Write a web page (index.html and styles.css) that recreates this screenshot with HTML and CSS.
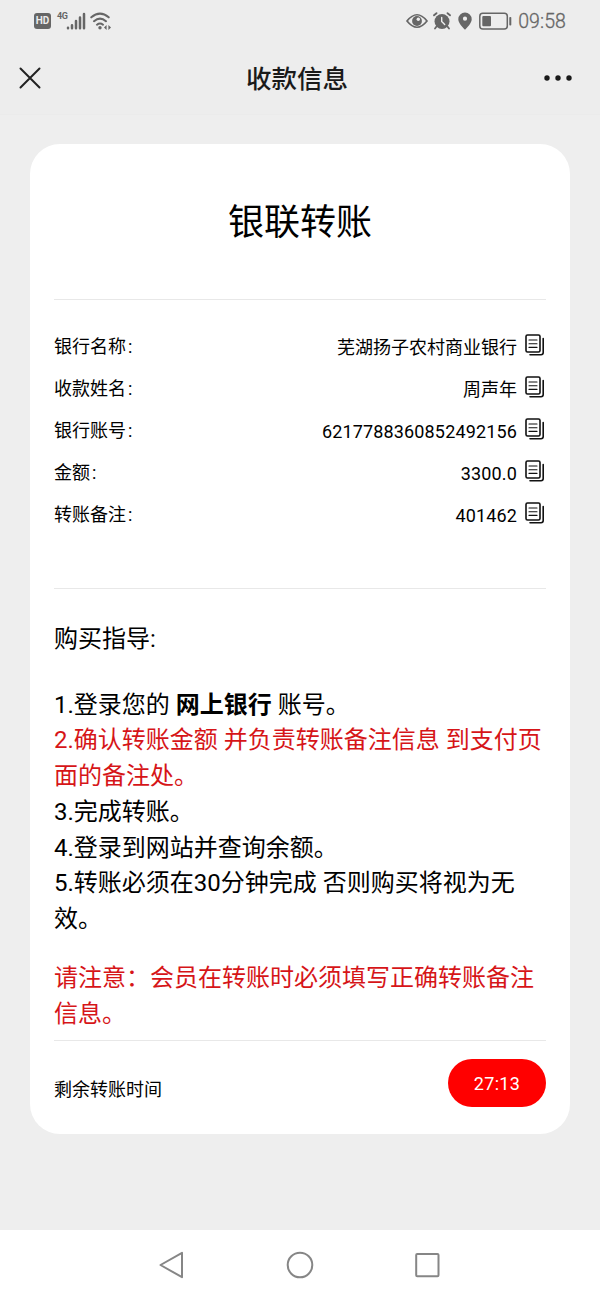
FILE: index.html
```
<!DOCTYPE html>
<html lang="zh-CN">
<head>
  <meta charset="UTF-8">
  <meta name="viewport" content="width=device-width, initial-scale=1.0">
  <title>收款信息</title>
  <link rel="stylesheet" href="styles.css">
</head>
<body>
  <svg width="0" height="0" class="defs">
    <symbol id="copy" viewBox="0 0 20 22">
      <rect x="1" y="1" width="14" height="17" rx="1.5"/>
      <path d="M4 6h8M4 9.8h8M4 13.4h8" stroke-width="1.1"/>
      <path d="M18.2 4.5v14q0 2.2-2.2 2.2H5"/>
    </symbol>
  </svg>
  <header>
    <div class="status">
      <div class="status-left">
        <span class="hd">HD</span>
        <span class="net">4G</span>
        <svg class="signal" width="20" height="18" viewBox="0 0 20 18" fill="none" stroke="#666" stroke-width="2.5" stroke-linecap="round"><path d="M2 16.2v-.4M6 16.2v-3M10 16.2V9M14 16.2V5.6M18 16.2V2"/></svg>
        <svg class="wifi" width="22" height="18" viewBox="0 0 22 18" fill="none" stroke="#666" stroke-width="2.1" stroke-linecap="round"><path d="M1.3 5.3q8.7-7.3 17.4 0M4 9.2q6-5 12 0M7 12.7q3-2.4 6 0"/><circle cx="10" cy="15.7" r="1.7" fill="#666" stroke="none"/><path d="M16.6 13v5L14 15.5zM18.4 13v5l2.6-2.5z" fill="#666" stroke="none"/></svg>
      </div>
      <div class="status-right">
        <svg width="22" height="16" viewBox="0 0 22 16" fill="none" stroke="#666" stroke-width="1.7"><path d="M1 8Q11-4.5 21 8 11 20.5 1 8z"/><circle cx="11" cy="8" r="4.9" fill="#666" stroke="none"/><circle cx="12.3" cy="6.2" r="1.7" fill="#ededed" stroke="none"/></svg>
        <svg class="alarm" width="18" height="18" viewBox="0 0 18 18" fill="none" stroke="#666" stroke-width="1.8" stroke-linecap="round"><circle cx="9" cy="9.5" r="7.5" fill="#666" stroke="none"/><path d="M1 3.3 3.5 1.2M17 3.3 14.5 1.2M3.5 14.5 2 16.5M14.5 14.5l1.5 2"/><path d="M8.7 5.5v4l3 3" stroke="#ededed" stroke-width="1.4"/></svg>
        <svg class="pin" width="14" height="18" viewBox="0 0 14 18"><path fill="#666" fill-rule="evenodd" d="M7 .5a6.7 6.7 0 0 1 6.7 6.7C13.7 11 9.5 15 7 17.7 4.5 15 .3 11 .3 7.2A6.7 6.7 0 0 1 7 .5zM7 4.6a2.1 2.1 0 1 0 0 4.2 2.1 2.1 0 0 0 0-4.2z"/></svg>
        <svg class="battery" width="33" height="18" viewBox="0 0 33 18"><rect x=".8" y="1.3" width="27.5" height="15.6" rx="3" fill="none" stroke="#666" stroke-width="1.5"/><rect x="3.3" y="4" width="8.7" height="10.2" rx="1" fill="#666"/><rect x="30.3" y="5" width="2" height="8.5" rx=".8" fill="#666"/></svg>
        <span class="clock">09:58</span>
      </div>
    </div>
    <div class="nav">
      <svg width="22" height="22" viewBox="0 0 22 22" fill="none" stroke="#222" stroke-width="2" stroke-linecap="round"><path d="M1.5 1.5l19 19M20.5 1.5l-19 19"/></svg>
      <h1>收款信息</h1>
      <svg width="28" height="6" viewBox="0 0 28 6" fill="#1a1a1a"><circle cx="3" cy="3" r="2.7"/><circle cx="14" cy="3" r="2.7"/><circle cx="25" cy="3" r="2.7"/></svg>
    </div>
  </header>

  <main>
    <div class="card">
      <h2>银联转账</h2>
      <div class="info">
        <div class="row"><span class="label">银行名称<i>:</i></span><span class="value">芜湖扬子农村商业银行</span><svg class="copy"><use href="#copy"/></svg></div>
        <div class="row"><span class="label">收款姓名<i>:</i></span><span class="value">周声年</span><svg class="copy"><use href="#copy"/></svg></div>
        <div class="row"><span class="label">银行账号<i>:</i></span><span class="value num">6217788360852492156</span><svg class="copy"><use href="#copy"/></svg></div>
        <div class="row"><span class="label">金额<i>:</i></span><span class="value num">3300.0</span><svg class="copy"><use href="#copy"/></svg></div>
        <div class="row"><span class="label">转账备注<i>:</i></span><span class="value num">401462</span><svg class="copy"><use href="#copy"/></svg></div>
      </div>
      <div class="guide">
        <h3>购买指导:</h3>
        <p>1.登录您的 <b>网上银行</b> 账号。</p>
        <p class="red">2.确认转账金额 并负责转账备注信息 到支付页面的备注处。</p>
        <p>3.完成转账。</p>
        <p>4.登录到网站并查询余额。</p>
        <p>5.转账必须在30分钟完成 否则购买将视为无效。</p>
        <p class="red notice">请注意：会员在转账时必须填写正确转账备注信息。</p>
      </div>
      <div class="timer">
        <span class="left">剩余转账时间</span>
        <span class="pill">27:13</span>
      </div>
    </div>
  </main>

  <footer>
    <svg width="26" height="28" viewBox="0 0 26 28"><path d="M23 1.8v24.4L1.5 14z"/></svg>
    <svg width="28" height="28" viewBox="0 0 28 28"><circle cx="14" cy="14" r="12.3"/></svg>
    <svg width="26" height="26" viewBox="0 0 26 26"><rect x="1.2" y="2" width="22.3" height="22.3" rx="1"/></svg>
  </footer>
</body>
</html>
```
FILE: styles.css
```
*{box-sizing:border-box;}
body{margin:0;height:1300px;display:flex;flex-direction:column;background:#eee;color:#000;font-family:Roboto,"Noto Sans CJK SC",sans-serif;}
h1,h2,h3,p{margin:0;font-weight:400;}
svg{display:block;flex:none;}
.defs{display:none;}

header{height:115px;background:#ededed;border-bottom:1px solid #ebebeb;}
.status{height:42px;padding:0 34px;display:flex;justify-content:space-between;color:#666;}
.status-left,.status-right{display:flex;align-items:center;}
.hd{width:17px;height:16px;border-radius:3px;background:#666;color:#ededed;font-size:10px;font-weight:700;line-height:16px;text-align:center;}
.net{margin:-10px 0 0 6px;font-size:9px;font-weight:700;line-height:10px;width:11px;letter-spacing:-.5px;}
.signal{margin:-1px 0 0 -2px;}
.wifi{margin-left:4px;}
.alarm{margin-left:5px;}
.pin{margin-left:7px;}
.battery{margin-left:7px;}
.clock{margin-left:6px;font-size:19.5px;font-weight:300;line-height:24px;margin-top:2px;letter-spacing:.1px;-webkit-text-stroke:.3px #666;}
.nav{height:72px;padding:0 28px 0 19px;display:flex;align-items:center;}
.nav h1{margin:2px auto 0 205px;font-size:25.5px;font-weight:500;line-height:36px;color:#1a1a1a;}

main{flex:1;padding:29px 30px 0;}
.card{height:990px;padding:0 24px;background:#fff;border-radius:30px;}
.card h2{height:156px;padding-top:53px;font-size:36px;line-height:52px;text-align:center;border-bottom:1px solid #e8e8e8;}
.info{height:289px;padding-top:25px;border-bottom:1px solid #e8e8e8;}
.row{height:42px;display:flex;align-items:center;font-size:18px;line-height:26px;}
.label{padding-top:2px;}
.label i{font-style:normal;margin-left:2px;}
.value{margin-left:auto;padding-top:4px;}
.num{letter-spacing:.15px;}
.copy{width:20px;height:22px;margin:-2px 1px 0 8px;fill:none;stroke:#111;stroke-width:1.6;stroke-linecap:round;}
.guide{height:452px;padding-top:33px;font-size:24px;line-height:35.7px;border-bottom:1px solid #e8e8e8;}
.guide h3{font-size:24px;margin-bottom:30px;}
.red{color:#d61518;}
.notice{margin-top:23.5px;}
.timer{display:flex;justify-content:space-between;align-items:flex-start;padding-top:18px;font-size:18px;line-height:26px;}
.left{padding-top:18px;}
.pill{width:98px;height:48px;border-radius:24px;background:#f00;color:#fff;line-height:50px;text-align:center;letter-spacing:.3px;}

footer{height:70px;background:#fff;display:flex;justify-content:center;align-items:center;gap:101px;}
footer svg{fill:none;stroke:#868686;stroke-width:2;stroke-linejoin:round;}
```
